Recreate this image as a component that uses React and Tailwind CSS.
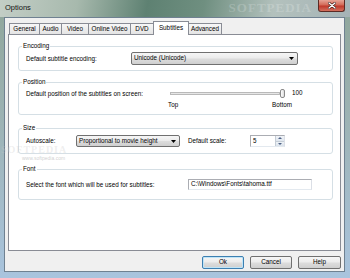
import React from "react";

const tabs = [
    { label: "General", w: "w-[31px]" },
    { label: "Audio", w: "w-[23px]" },
    { label: "Video", w: "w-[28px]" },
    { label: "Online Video", w: "w-[43px]" },
    { label: "DVD", w: "w-[24px]" },
    { label: "Subtitles", w: "w-[36px]", active: true },
    { label: "Advanced", w: "w-[34px]" },
];

const btnFace = "bg-[linear-gradient(#f6f6f6,#ebebeb_48%,#dddddd_52%,#cfcfcf)]";

function Combo({ value, className }) {
    return (
        <div className={`flex items-center justify-between rounded-[2px] border border-[#707070] ${btnFace} pl-[2px] pr-[3px] ${className}`}>
            <span className="leading-none">{value}</span>
            <svg width="5" height="3" viewBox="0 0 5 3"><path d="M0 0h5L2.5 3z" fill="#000" /></svg>
        </div>
    );
}

function GroupBox({ title, className, children }) {
    return (
        <fieldset className={`rounded-[3px] border border-[#d5dfe5] ${className}`}>
            <legend className="ml-[3px] px-[1px] leading-[8px]">{title}</legend>
            <div className="pl-[7px]">{children}</div>
        </fieldset>
    );
}

export default function App() {
    return (
        <div className="relative w-[350px] h-[278px] flex flex-col overflow-hidden bg-[linear-gradient(#8fa69a,#9db3b5_45%,#a9c4de)] font-['Liberation_Sans',Arial,sans-serif] text-[6.3px] text-black">
            {/* title bar */}
            <div className="h-[17px] flex items-start bg-[linear-gradient(100deg,#c3cec6_0%,#a7b9ad_22%,#5e8172_42%,#6f8f80_58%,#b3c1bd_78%,#a5b3b6_100%)]">
                <span className="pl-[5px] pt-[3px] text-[7.5px] leading-[10px] text-[#111]">Options</span>
                <span className="ml-auto mr-[6px] pt-[1px] text-[13px] leading-[14px] tracking-[1px] font-['Liberation_Serif',serif] font-bold text-white/20">SOFTPEDIA</span>
                <div className="mr-[5px] w-[27px] h-[12px] flex items-center justify-center rounded-b-[3px] border border-t-0 border-[#5b2a24] bg-[linear-gradient(#e6a496,#d36a58_45%,#c0392b_55%,#d2705e)]">
                    <svg width="8" height="7" viewBox="0 0 8 7">
                        <path d="M1 1l6 5M7 1L1 6" stroke="#3a1510" strokeWidth="2.6" strokeLinecap="round" />
                        <path d="M1 1l6 5M7 1L1 6" stroke="#fff" strokeWidth="1.4" strokeLinecap="round" />
                    </svg>
                </div>
            </div>

            {/* client */}
            <div className="flex-1 flex pl-[4px] pr-[5px] pb-[6px]">
                <div className="flex-1 flex flex-col border border-[#6f8191] bg-[#f0f0f0] pt-[3px] pb-[2px]">
                    <div className="h-[13px] ml-[4px] flex items-end">
                        {tabs.map((t, i) => (
                            <div
                                key={t.label}
                                className={`${t.w} ${i > 0 ? "-ml-px" : ""} flex items-center justify-center border border-b-0 border-[#898c95] leading-none ${t.active ? "relative z-10 h-[14px] -mb-px bg-white" : "h-[11px] bg-[linear-gradient(#f7f7f7,#e4e4e4)]"}`}
                            >
                                {t.label}
                            </div>
                        ))}
                    </div>

                    <div className="mx-[3px] h-[217px] flex flex-col border border-[#898c95] bg-white pt-[7px] pl-[9px] pr-[7px]">
                        <GroupBox title="Encoding" className="h-[29px]">
                            <div className="pt-[2px] flex items-center">
                                <span className="w-[105px]">Default subtitle encoding:</span>
                                <Combo value="Unicode (Unicode)" className="w-[167px] h-[13px]" />
                            </div>
                        </GroupBox>

                        <GroupBox title="Position" className="mt-[7px] h-[37px]">
                            <div className="pt-[2px] flex items-start">
                                <span className="w-[142px] mt-[1px] leading-[10px]">Default position of the subtitles on screen:</span>
                                <div className="w-[124px] flex flex-col">
                                    <div className="h-[10px] flex items-center">
                                        <div className="ml-[2px] w-[110px] h-[3px] border border-[#b9b9b9] bg-[#e6e6e6]" />
                                        <div className="w-[5px] h-[9px] rounded-[2px] border border-[#8a8a8a] bg-[linear-gradient(90deg,#ffffff,#dcdcdc)]" />
                                    </div>
                                    <div className="mt-[3px] flex justify-between leading-[8px]">
                                        <span>Top</span>
                                        <span>Bottom</span>
                                    </div>
                                </div>
                                <span className="leading-[10px]">100</span>
                            </div>
                        </GroupBox>

                        <GroupBox title="Size" className="mt-[9px] h-[30px]">
                            <div className="pt-[3px] flex items-center">
                                <span className="w-[50px]">Autoscale:</span>
                                <Combo value="Proportional to movie height" className="w-[104px] h-[12px]" />
                                <span className="ml-[8px] w-[62px]">Default scale:</span>
                                <div className="w-[35px] h-[12px] flex border border-[#abadb3] border-b-[#e3e9ef] border-r-[#dbdfe6] bg-white">
                                    <span className="flex-1 pl-[2px] self-center leading-none">5</span>
                                    <div className="w-[9px] flex flex-col border-l border-[#c5cdd6]">
                                        <div className="flex-1 flex items-center justify-center bg-[linear-gradient(#f1f4f8,#dfe6ee)] border-b border-[#c5cdd6]">
                                            <svg width="4" height="2" viewBox="0 0 4 2"><path d="M0 2h4L2 0z" fill="#4d6185" /></svg>
                                        </div>
                                        <div className="flex-1 flex items-center justify-center bg-[linear-gradient(#eef2f6,#dbe3ec)]">
                                            <svg width="4" height="2" viewBox="0 0 4 2"><path d="M0 0h4L2 2z" fill="#4d6185" /></svg>
                                        </div>
                                    </div>
                                </div>
                            </div>
                        </GroupBox>

                        <GroupBox title="Font" className="mt-[11px] h-[35px]">
                            <div className="pt-[6px] flex items-center">
                                <span className="w-[162px]">Select the font which will be used for subtitles:</span>
                                <div className="w-[124px] h-[11px] flex items-center border border-[#abadb3] border-b-[#e3e9ef] border-r-[#dbdfe6] bg-white pl-[2px] leading-none">
                                    C:\Windows\Fonts\tahoma.ttf
                                </div>
                            </div>
                        </GroupBox>
                    </div>

                    <div className="mt-[5px] mr-[3px] flex justify-end gap-[6px]">
                        <button className={`w-[42px] h-[13px] rounded-[2px] border border-[#3c7fb1] ${btnFace} shadow-[inset_0_0_0_1px_#bfe4f7] leading-none`}>Ok</button>
                        <button className={`w-[42px] h-[13px] rounded-[2px] border border-[#707070] ${btnFace} leading-none`}>Cancel</button>
                        <button className={`w-[43px] h-[13px] rounded-[2px] border border-[#707070] ${btnFace} leading-none`}>Help</button>
                    </div>
                </div>
            </div>

            {/* watermark overlay */}
            <div className="absolute left-[1px] top-[145px] flex flex-col pointer-events-none">
                <span className="text-[10px] leading-[10px] tracking-[1px] font-['Liberation_Serif',serif] font-bold text-[#c8c8c8]/30">SOFTPEDIA</span>
                <span className="ml-[21px] text-[5px] leading-[7px] text-[#b0b0b0]/60">www.softpedia.com</span>
            </div>
        </div>
    );
}
